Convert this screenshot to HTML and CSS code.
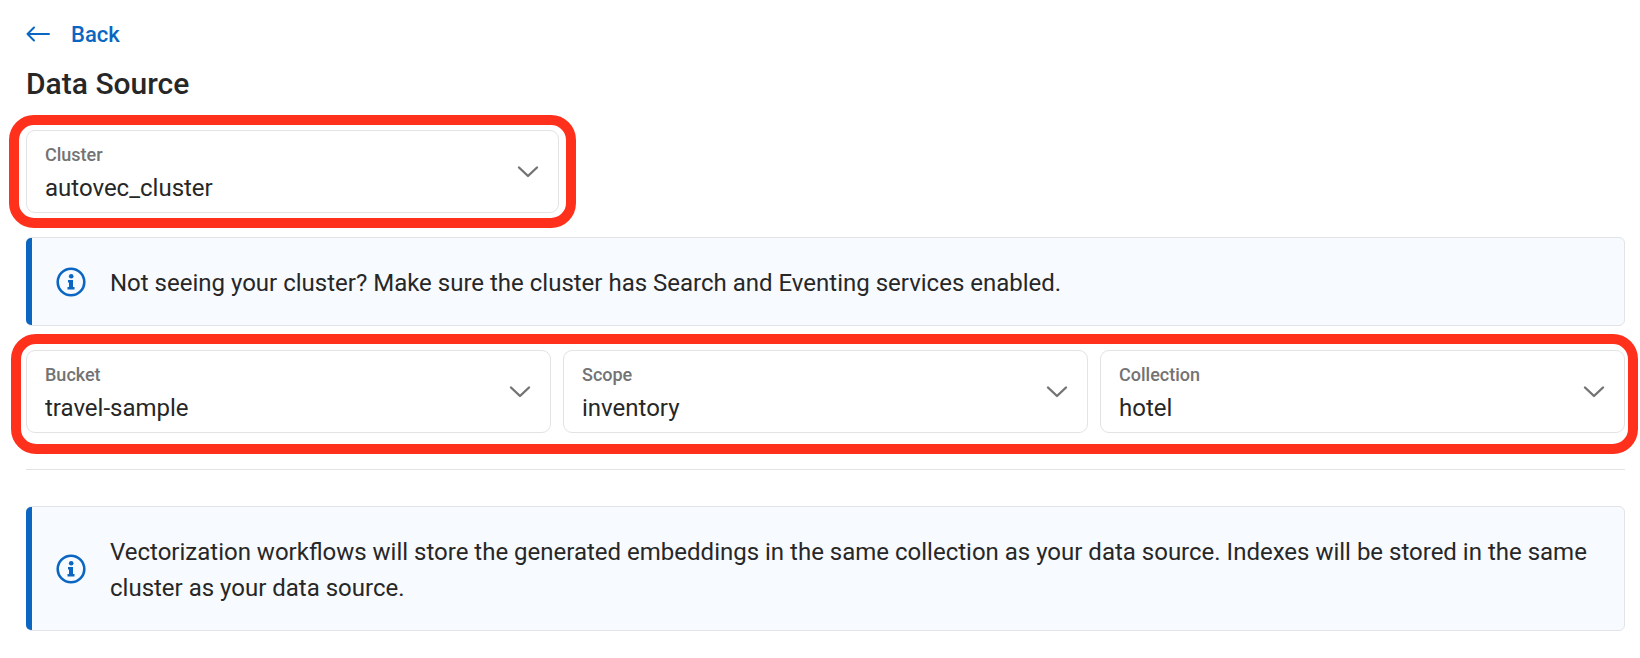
FILE: index.html
```
<!DOCTYPE html>
<html lang="en">
<head>
<meta charset="utf-8">
<meta name="viewport" content="width=device-width, initial-scale=1">
<title>Data Source</title>
<link rel="stylesheet" href="styles.css">
</head>
<body>
<main class="page">
  <a class="back" href="#">
    <svg class="back-icon" width="24" height="16" viewBox="0 0 24 16" fill="none" stroke="currentColor" stroke-width="2" stroke-linecap="round" stroke-linejoin="round" aria-hidden="true"><path d="M23 8H1.500M8 1.500 1.500 8l6.500 6.500"/></svg>
    <span class="back-text">Back</span>
  </a>
  <h1 class="title">Data Source</h1>

  <div class="group group-cluster">
    <div class="field">
      <label class="field-label" for="cluster">Cluster</label>
      <select class="field-select" id="cluster"><option>autovec_cluster</option></select>
      <svg class="chevron" width="22" height="13" viewBox="0 0 22 13" aria-hidden="true"><path d="M2 2.500l9 8.500L20 2.500"/></svg>
    </div>
  </div>

  <div class="notice">
    <svg class="info" width="30" height="30" viewBox="0 0 30 30" aria-hidden="true"><circle class="info-ring" cx="15" cy="15" r="13.300"/><circle cx="15.200" cy="9.300" r="2.300"/><path d="M12 13h5v7h1.500v2.500h-7V20H13v-4.500h-1z"/></svg>
    <p class="notice-text">Not seeing your cluster? Make sure the cluster has Search and Eventing services enabled.</p>
  </div>

  <div class="group group-keyspace">
    <div class="field">
      <label class="field-label" for="bucket">Bucket</label>
      <select class="field-select" id="bucket"><option>travel-sample</option></select>
      <svg class="chevron" width="22" height="13" viewBox="0 0 22 13" aria-hidden="true"><path d="M2 2.500l9 8.500L20 2.500"/></svg>
    </div>
    <div class="field">
      <label class="field-label" for="scope">Scope</label>
      <select class="field-select" id="scope"><option>inventory</option></select>
      <svg class="chevron" width="22" height="13" viewBox="0 0 22 13" aria-hidden="true"><path d="M2 2.500l9 8.500L20 2.500"/></svg>
    </div>
    <div class="field">
      <label class="field-label" for="collection">Collection</label>
      <select class="field-select" id="collection"><option>hotel</option></select>
      <svg class="chevron" width="22" height="13" viewBox="0 0 22 13" aria-hidden="true"><path d="M2 2.500l9 8.500L20 2.500"/></svg>
    </div>
  </div>

  <hr class="divider">

  <div class="notice">
    <svg class="info" width="30" height="30" viewBox="0 0 30 30" aria-hidden="true"><circle class="info-ring" cx="15" cy="15" r="13.300"/><circle cx="15.200" cy="9.300" r="2.300"/><path d="M12 13h5v7h1.500v2.500h-7V20H13v-4.500h-1z"/></svg>
    <p class="notice-text">Vectorization workflows will store the generated embeddings in the same collection as your data source. Indexes will be stored in the same cluster as your data source.</p>
  </div>
</main>
</body>
</html>
```
FILE: styles.css
```
* { box-sizing: border-box; }

body {
  margin: 0;
  background: #fff;
  color: #272727;
  font-family: Roboto, "Liberation Sans", sans-serif;
  font-size: 24px;
  line-height: 36px;
}

.page { padding: 15px 15px 26px 26px; }

.back {
  display: inline-flex;
  align-items: center;
  gap: 21px;
  color: #0b66c2;
  font-size: 22px;
  font-weight: 500;
  text-decoration: none;
}

.back-icon { display: block; }

.back-text { padding-top: 2px; }

.title {
  margin: 11px 0 26px;
  font-size: 30px;
  font-weight: 500;
  line-height: 40px;
}

.group {
  position: relative;
  display: grid;
  grid-template-columns: repeat(3, 1fr);
  gap: 12px;
}

.group-cluster {
  width: calc(100% / 3);
  grid-template-columns: 1fr;
  margin-bottom: 24px;
}

.group-keyspace { margin: 24px 0 36px; }

/* Highlight ring drawn over the fields */
.group::after {
  content: "";
  position: absolute;
  inset: -15px -17px;
  border: 10px solid #ff311c;
  border-radius: 25px;
  pointer-events: none;
}

.group-keyspace::after { inset: -16px -13px -21px -15px; }

.field {
  display: grid;
  grid-template-columns: 1fr auto;
}

.field-label {
  grid-area: 1 / 1;
  align-self: start;
  padding: 12px 0 0 19px;
  color: #737373;
  font-size: 18px;
  font-weight: 500;
  line-height: 26px;
  pointer-events: none;
  z-index: 1;
}

.field-select {
  grid-area: 1 / 1 / 2 / 3;
  width: 100%;
  height: 83px;
  padding: 32px 56px 0 18px;
  border: 1px solid #e3e3e3;
  border-radius: 9px;
  appearance: none;
  background: #fff;
  color: inherit;
  font: inherit;
}

.chevron {
  grid-area: 1 / 2;
  align-self: center;
  margin-right: 20px;
  fill: none;
  stroke: #737373;
  stroke-width: 2.400;
  stroke-linecap: round;
  stroke-linejoin: round;
  pointer-events: none;
  z-index: 1;
}

.notice {
  position: relative;
  display: flex;
  align-items: center;
  gap: 24px;
  padding: 0 29px;
  border: 1px solid #e1e3e6;
  border-radius: 6px;
  background: #f7faff;
}

/* Accent bar along the leading edge */
.notice::before {
  content: "";
  position: absolute;
  inset: 0 auto 0 -1px;
  width: 6px;
  border-radius: 5px 0 0 5px;
  background: #0b66c2;
}

.notice-text {
  margin: 0;
  padding: 27px 0 24px;
}

.info {
  flex: none;
  fill: #0b66c2;
}

.info-ring {
  fill: none;
  stroke: #0b66c2;
  stroke-width: 2.600;
}

.divider {
  height: 1px;
  margin: 0 0 36px;
  border: 0;
  background: #e3e3e3;
}
```
